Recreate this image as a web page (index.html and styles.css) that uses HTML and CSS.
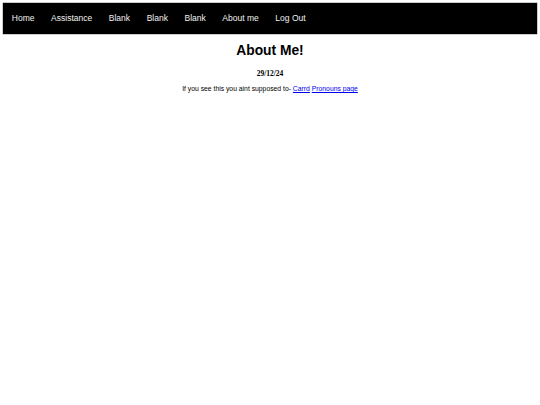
FILE: index.html
```html
<!DOCTYPE html>
<html>
<head>
<meta charset="utf-8">
<link rel="stylesheet" href="styles.css">
</head>
<body>
<nav class="topnav">
  <a class="nav-link" href="#">Home</a>
  <a class="nav-link" href="#">Assistance</a>
  <a class="nav-link" href="#">Blank</a>
  <a class="nav-link" href="#">Blank</a>
  <a class="nav-link" href="#">Blank</a>
  <a class="nav-link" href="#">About me</a>
  <a class="nav-link" href="#">Log Out</a>
</nav>
<main class="content">
  <h1 class="title">About Me!</h1>
  <h4 class="date">29/12/24</h4>
  <p class="note">If you see this you aint supposed to- <a href="#">Carrd</a> <a href="#">Pronouns page</a></p>
</main>
</body>
</html>
```
FILE: styles.css
```css
html, body {
  margin: 0;
  padding: 0;
  background: #fff;
}
body {
  padding: 3px;
  font-family: "Liberation Sans", Arial, sans-serif;
}
.topnav {
  display: flex;
  align-items: center;
  height: 31px;
  background: #000;
  padding: 0 0.5px;
  box-shadow: 0 0 0 0.5px #999;
}
.nav-link {
  color: #f2f2f2;
  text-decoration: none;
  font-size: 8.5px;
  padding: 0 8.3px;
  line-height: 31px;
}
.content {
  text-align: center;
}
.title {
  font-size: 13.8px;
  font-weight: bold;
  margin: 9px 0 0;
  line-height: 16px;
}
.date {
  font-family: "Liberation Serif", "Times New Roman", serif;
  font-size: 7.5px;
  font-weight: bold;
  margin: 10px 0 0;
  line-height: 10px;
}
.note {
  font-size: 6.8px;
  margin: 5px 0 0;
  line-height: 10px;
}
.note a {
  color: #0000ee;
}
```
